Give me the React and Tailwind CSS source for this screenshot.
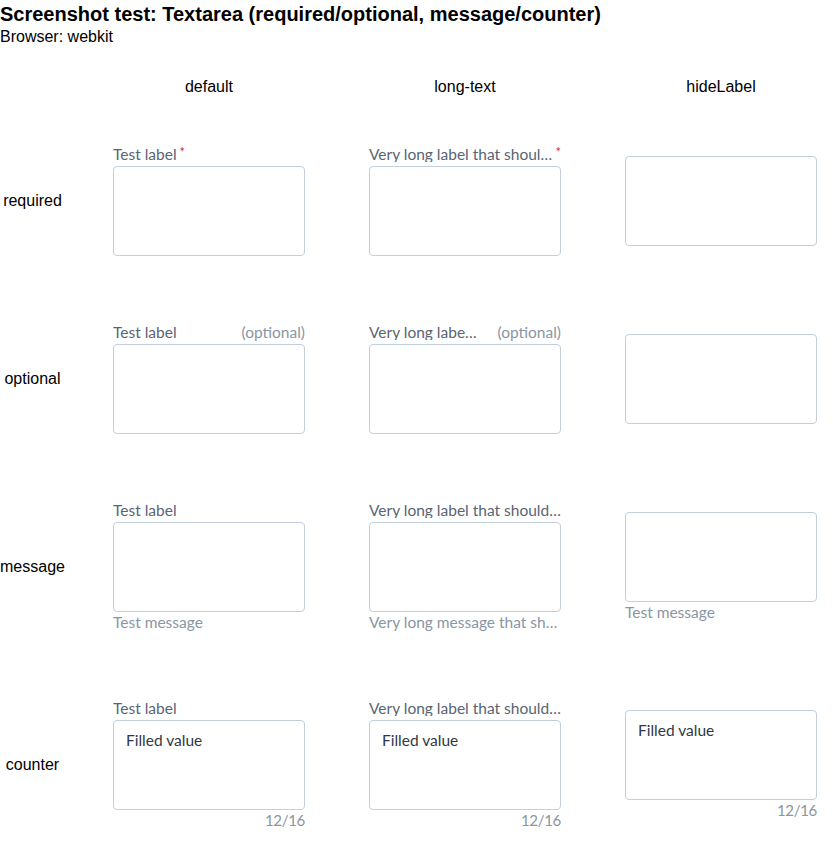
import React from "react";

const LABEL_FONT = { fontFamily: "Lato, 'Noto Sans', sans-serif" };

function Field({ label, required, optional, message, counter, value, hideLabel }) {
  return (
    <div className="w-[192px] flex flex-col" style={LABEL_FONT}>
      {!hideLabel && (
        <div className="flex items-start leading-[16px] pb-1 text-[15.5px] text-[#5a6572] h-5">
          <span className="truncate min-w-0">{label}</span>
          {required && <span className="shrink-0 ml-[3px] text-[#d0343a] text-[13px] leading-[13px]">*</span>}
          {optional && <span className="shrink-0 ml-auto pl-5 text-[#8a96a3]">(optional)</span>}
        </div>
      )}
      <textarea
        readOnly
        value={value || ""}
        className="block w-[192px] h-[90px] resize-none rounded-[4px] border border-[#c3cfdb] bg-white px-3 py-[9px] text-[15.5px] leading-5 text-[#2f3943] outline-none"
        style={LABEL_FONT}
      />
      {message && <div className="truncate leading-5 text-[15.5px] text-[#8a96a3]">{message}</div>}
      {counter && <div className="text-right leading-5 text-[15px] tracking-[-0.3px] text-[#8a96a3]">{counter}</div>}
    </div>
  );
}

const ARIAL = { fontFamily: "'Liberation Sans', Arial, sans-serif" };

function Row({ name, children }) {
  return (
    <div className="flex items-center py-[34px]">
      <div className="w-[65px] text-center text-[16px] leading-5 text-black" style={ARIAL}>{name}</div>
      <div className="ml-12 flex gap-16 items-center">{children}</div>
    </div>
  );
}

export default function App() {
  const longLabel = "Very long label that should be truncated";
  const longMsg = "Very long message that should be truncated";
  return (
    <div className="w-[833px] bg-white text-black pt-[2px]" style={ARIAL}>
      <div className="text-[20px] font-bold leading-[24px]">Screenshot test: Textarea (required/optional, message/counter)</div>
      <div className="text-[16px] leading-[18px] mt-[2px]">Browser: webkit</div>
      <div className="flex mt-[31px] text-[16px] leading-5">
        <div className="w-[65px]" />
        <div className="ml-12 flex gap-16">
          <div className="w-[192px] text-center">default</div>
          <div className="w-[192px] text-center">long-text</div>
          <div className="w-[192px] text-center">hideLabel</div>
        </div>
      </div>
      <div className="mt-[15px]">
        <Row name="required">
          <Field label="Test label" required />
          <Field label={longLabel} required />
          <Field hideLabel />
        </Row>
        <Row name="optional">
          <Field label="Test label" optional />
          <Field label={longLabel} optional />
          <Field hideLabel />
        </Row>
        <Row name="message">
          <Field label="Test label" message="Test message" />
          <Field label={longLabel} message={longMsg} />
          <Field hideLabel message="Test message" />
        </Row>
        <Row name="counter">
          <Field label="Test label" value="Filled value" counter="12/16" />
          <Field label={longLabel} value="Filled value" counter="12/16" />
          <Field hideLabel value="Filled value" counter="12/16" />
        </Row>
      </div>
    </div>
  );
}
